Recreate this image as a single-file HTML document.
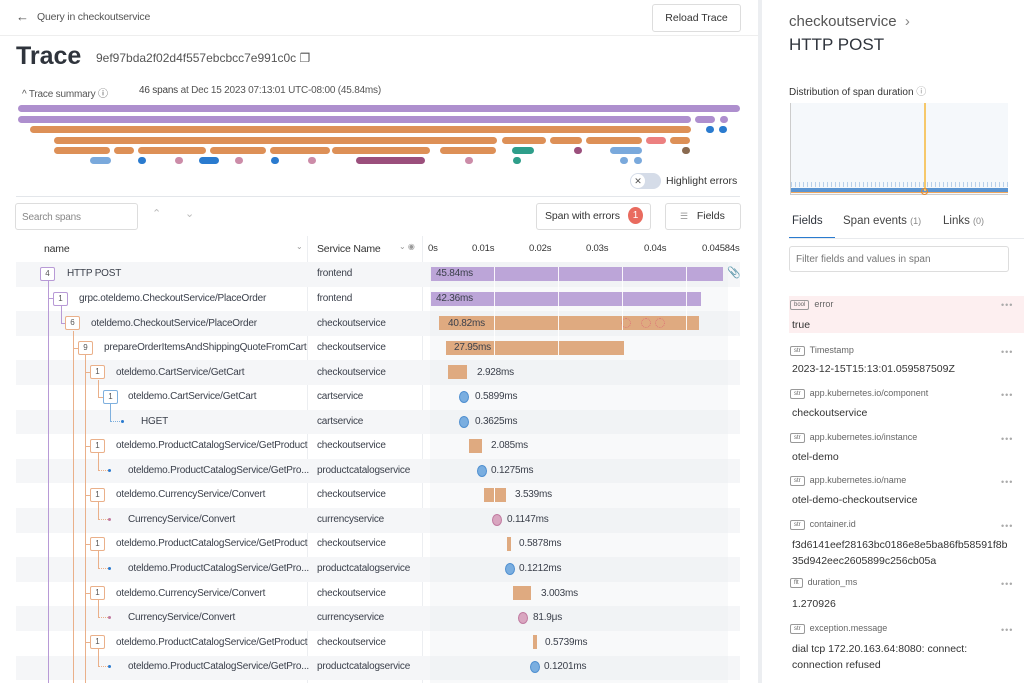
<!DOCTYPE html>
<html><head><meta charset="utf-8"><style>
*{box-sizing:border-box;margin:0;padding:0}
body{width:1024px;height:683px;overflow:hidden;background:#fff;font-family:"Liberation Sans",sans-serif;color:#3a3f4a;position:relative}
.a{position:absolute}
.t{font-size:10px;letter-spacing:-0.2px;white-space:nowrap}
.row{position:absolute;left:16px;width:724px;height:24.6px}
.g{background:#f5f6f8}
.bd{position:absolute;width:15px;height:14px;border:1px solid;border-radius:2px;font-size:8px;text-align:center;line-height:12px;background:#fff}
.po{border-color:#b89ad6;color:#555}.or{border-color:#eab08a;color:#555}.bl{border-color:#7fb0de;color:#555}
.bar{position:absolute;height:14px}
.pu{background:#bca5d8}.oa{background:#dfaa80}
.lbl{position:absolute;font-size:10px;letter-spacing:-0.2px;color:#3a3f4a}
.dot{position:absolute;width:10px;height:12px;border-radius:50%}
.db{background:#7aaee0;border:1px solid #4f8fd0}
.dp{background:#d9a6c0;border:1px solid #c07aa0}
.ln{position:absolute}
.sb{position:absolute;height:7px;border-radius:4px}
.fk{position:absolute;left:790px;font-size:9px;color:#666}
.fk b{display:inline-block;border:1px solid #999;border-radius:2px;font-size:6px;font-weight:normal;padding:0 3px;margin-right:5px;line-height:8px;vertical-align:1px}
.fv{position:absolute;left:792px;font-size:10.5px;color:#333}
.dd{position:absolute;left:1001px;font-size:9px;color:#aaa;letter-spacing:1px}
</style></head><body>
<div class="a" style="left:16px;top:9px;font-size:13px;color:#555">&#8592;</div>
<div class="a t" style="left:37px;top:11px;font-size:10.5px;color:#555">Query in checkoutservice</div>
<div class="a" style="left:652px;top:4px;width:89px;height:28px;border:1px solid #ddd;border-radius:3px;font-size:10.5px;text-align:center;line-height:26px;color:#333">Reload Trace</div>
<div class="a" style="left:0;top:35px;width:758px;height:1px;background:#eee"></div>
<div class="a" style="left:16px;top:42px;font-size:25px;font-weight:bold;color:#2f343c">Trace</div>
<div class="a t" style="left:96px;top:51px;font-size:12px;color:#555;letter-spacing:0">9ef97bda2f02d4f557ebcbcc7e991c0c &#10064;</div>
<div class="a t" style="left:22px;top:85px;font-size:10px;color:#555">^ Trace summary &#9432;</div>
<div class="a t" style="left:139px;top:85px;font-size:10px;color:#555"><b style="color:#444;font-weight:normal">46 spans</b> at Dec 15 2023 07:13:01 UTC-08:00 (45.84ms)</div>
<div class="sb" style="left:18px;width:722px;top:105px;background:#ae8fce"></div>
<div class="sb" style="left:18px;width:673px;top:116px;background:#ae8fce"></div>
<div class="sb" style="left:695px;width:20px;top:116px;background:#ae8fce"></div>
<div class="sb" style="left:720px;width:8px;top:116px;background:#ae8fce"></div>
<div class="sb" style="left:30px;width:661px;top:126px;background:#dd9057"></div>
<div class="sb" style="left:706px;width:8px;top:126px;background:#2a7bcf"></div>
<div class="sb" style="left:719px;width:8px;top:126px;background:#2a7bcf"></div>
<div class="sb" style="left:54px;width:443px;top:137px;background:#dd9057"></div>
<div class="sb" style="left:502px;width:44px;top:137px;background:#dd9057"></div>
<div class="sb" style="left:550px;width:32px;top:137px;background:#dd9057"></div>
<div class="sb" style="left:586px;width:56px;top:137px;background:#dd9057"></div>
<div class="sb" style="left:646px;width:20px;top:137px;background:#ec8080"></div>
<div class="sb" style="left:670px;width:20px;top:137px;background:#dd9057"></div>
<div class="sb" style="left:54px;width:56px;top:147px;background:#dd9057"></div>
<div class="sb" style="left:114px;width:20px;top:147px;background:#dd9057"></div>
<div class="sb" style="left:138px;width:68px;top:147px;background:#dd9057"></div>
<div class="sb" style="left:210px;width:56px;top:147px;background:#dd9057"></div>
<div class="sb" style="left:270px;width:60px;top:147px;background:#dd9057"></div>
<div class="sb" style="left:332px;width:98px;top:147px;background:#dd9057"></div>
<div class="sb" style="left:440px;width:56px;top:147px;background:#dd9057"></div>
<div class="sb" style="left:512px;width:22px;top:147px;background:#2e9e8a"></div>
<div class="sb" style="left:574px;width:8px;top:147px;background:#9b4f7c"></div>
<div class="sb" style="left:610px;width:32px;top:147px;background:#7aa9dc"></div>
<div class="sb" style="left:682px;width:8px;top:147px;background:#8a6a50"></div>
<div class="sb" style="left:90px;width:21px;top:157px;background:#7aa9dc"></div>
<div class="sb" style="left:138px;width:8px;top:157px;background:#2a7bcf"></div>
<div class="sb" style="left:175px;width:8px;top:157px;background:#cc8ca8"></div>
<div class="sb" style="left:199px;width:20px;top:157px;background:#2a7bcf"></div>
<div class="sb" style="left:235px;width:8px;top:157px;background:#cc8ca8"></div>
<div class="sb" style="left:271px;width:8px;top:157px;background:#2a7bcf"></div>
<div class="sb" style="left:308px;width:8px;top:157px;background:#cc8ca8"></div>
<div class="sb" style="left:356px;width:69px;top:157px;background:#9b4f7c"></div>
<div class="sb" style="left:465px;width:8px;top:157px;background:#cc8ca8"></div>
<div class="sb" style="left:513px;width:8px;top:157px;background:#2e9e8a"></div>
<div class="sb" style="left:620px;width:8px;top:157px;background:#7aa9dc"></div>
<div class="sb" style="left:634px;width:8px;top:157px;background:#7aa9dc"></div>
<div class="a" style="left:630px;top:173px;width:31px;height:16px;border-radius:8px;background:#d5dce8"></div>
<div class="a" style="left:631px;top:174px;width:14px;height:14px;border-radius:50%;background:#fff;font-size:9px;text-align:center;line-height:14px;color:#555">&#10005;</div>
<div class="a t" style="left:666px;top:175px;font-size:10.5px;color:#333;letter-spacing:0">Highlight errors</div>
<div class="a" style="left:16px;top:196px;width:724px;height:1px;background:#e3e6ea"></div>
<div class="a t" style="left:15px;top:203px;width:123px;height:27px;border:1px solid #ddd;border-radius:3px;padding:8px 6px;font-size:10px;color:#888">Search spans</div>
<div class="a" style="left:152px;top:207px;font-size:11px;color:#bbb">&#8963;</div>
<div class="a" style="left:185px;top:207px;font-size:11px;color:#bbb">&#8964;</div>
<div class="a" style="left:536px;top:203px;width:115px;height:27px;border:1px solid #ddd;border-radius:3px"></div>
<div class="a t" style="left:545px;top:210px;font-size:10.5px;color:#333;letter-spacing:-0.1px">Span with errors</div>
<div class="a" style="left:628px;top:207px;width:15px;height:17px;border-radius:50%;background:#e96b5f;color:#fff;font-size:10px;text-align:center;line-height:17px">1</div>
<div class="a" style="left:665px;top:203px;width:76px;height:27px;border:1px solid #ddd;border-radius:3px;font-size:10.5px;line-height:25px;color:#333;padding-left:14px"><span style="color:#999;font-size:9px">&#9776;</span>&nbsp;&nbsp;&nbsp;Fields</div>
<div class="a t" style="left:44px;top:243px;font-size:10.5px;color:#333">name</div>
<div class="a" style="left:296px;top:242px;font-size:8px;color:#999">&#8964;</div>
<div class="a" style="left:307px;top:236px;width:1px;height:447px;background:#eceef1"></div>
<div class="a" style="left:422px;top:236px;width:1px;height:447px;background:#eceef1"></div>
<div class="a t" style="left:317px;top:243px;font-size:10.5px;color:#333">Service Name</div>
<div class="a" style="left:399px;top:242px;font-size:8px;color:#999">&#8964; &#9673;</div>
<div class="a t" style="left:428px;top:243px;font-size:9.5px;color:#333">0s</div>
<div class="a t" style="left:472px;top:243px;font-size:9.5px;color:#333">0.01s</div>
<div class="a t" style="left:529px;top:243px;font-size:9.5px;color:#333">0.02s</div>
<div class="a t" style="left:586px;top:243px;font-size:9.5px;color:#333">0.03s</div>
<div class="a t" style="left:644px;top:243px;font-size:9.5px;color:#333">0.04s</div>
<div class="a t" style="left:702px;top:243px;font-size:9.5px;color:#333">0.04584s</div>
<div class="row g" style="top:262px"></div>
<div class="row" style="top:286.6px"></div>
<div class="row g" style="top:311.2px"></div>
<div class="row" style="top:335.8px"></div>
<div class="row g" style="top:360.4px"></div>
<div class="row" style="top:385px"></div>
<div class="row g" style="top:409.6px"></div>
<div class="row" style="top:434.2px"></div>
<div class="row g" style="top:458.8px"></div>
<div class="row" style="top:483.4px"></div>
<div class="row g" style="top:508px"></div>
<div class="row" style="top:532.6px"></div>
<div class="row g" style="top:557.2px"></div>
<div class="row" style="top:581.8px"></div>
<div class="row g" style="top:606.4px"></div>
<div class="row" style="top:631px"></div>
<div class="row g" style="top:655.6px"></div>
<div class="a" style="left:430px;top:262px;width:298px;height:421px;background:rgba(235,238,242,0.35)"></div>
<div class="ln" style="left:48px;top:281px;width:1px;height:402px;background:#b89ad6"></div>
<div class="ln" style="left:48px;top:298px;width:5px;height:1px;background:#b89ad6"></div>
<div class="ln" style="left:61px;top:306px;width:1px;height:17px;background:#b89ad6"></div>
<div class="ln" style="left:61px;top:323px;width:4px;height:1px;background:#b89ad6"></div>
<div class="ln" style="left:73px;top:331px;width:1px;height:352px;background:#eab08a"></div>
<div class="ln" style="left:73px;top:348px;width:5px;height:1px;background:#eab08a"></div>
<div class="ln" style="left:85px;top:355px;width:1px;height:328px;background:#eab08a"></div>
<div class="ln" style="left:85px;top:372px;width:5px;height:1px;background:#eab08a"></div>
<div class="ln" style="left:98px;top:380px;width:1px;height:17px;background:#eab08a"></div>
<div class="ln" style="left:98px;top:397px;width:5px;height:1px;background:#eab08a"></div>
<div class="ln" style="left:110px;top:404px;width:1px;height:17px;background:#7fb0de"></div>
<div class="ln" style="left:110px;top:421px;width:10px;height:1px;border-top:1px dotted #7fb0de"></div>
<div class="ln" style="left:121px;top:420px;width:3px;height:3px;border-radius:50%;background:#2a7bcf"></div>
<div class="ln" style="left:85px;top:446px;width:5px;height:1px;background:#eab08a"></div>
<div class="ln" style="left:98px;top:453px;width:1px;height:17px;background:#eab08a"></div>
<div class="ln" style="left:98px;top:470px;width:10px;height:1px;border-top:1px dotted #eab08a"></div>
<div class="ln" style="left:108px;top:469px;width:3px;height:3px;border-radius:50%;background:#2a7bcf"></div>
<div class="ln" style="left:85px;top:495px;width:5px;height:1px;background:#eab08a"></div>
<div class="ln" style="left:98px;top:502px;width:1px;height:17px;background:#eab08a"></div>
<div class="ln" style="left:98px;top:519px;width:10px;height:1px;border-top:1px dotted #eab08a"></div>
<div class="ln" style="left:108px;top:518px;width:3px;height:3px;border-radius:50%;background:#c07aa0"></div>
<div class="ln" style="left:85px;top:544px;width:5px;height:1px;background:#eab08a"></div>
<div class="ln" style="left:98px;top:551px;width:1px;height:17px;background:#eab08a"></div>
<div class="ln" style="left:98px;top:568px;width:10px;height:1px;border-top:1px dotted #eab08a"></div>
<div class="ln" style="left:108px;top:567px;width:3px;height:3px;border-radius:50%;background:#2a7bcf"></div>
<div class="ln" style="left:85px;top:593px;width:5px;height:1px;background:#eab08a"></div>
<div class="ln" style="left:98px;top:600px;width:1px;height:17px;background:#eab08a"></div>
<div class="ln" style="left:98px;top:617px;width:10px;height:1px;border-top:1px dotted #eab08a"></div>
<div class="ln" style="left:108px;top:616px;width:3px;height:3px;border-radius:50%;background:#c07aa0"></div>
<div class="ln" style="left:85px;top:642px;width:5px;height:1px;background:#eab08a"></div>
<div class="ln" style="left:98px;top:649px;width:1px;height:17px;background:#eab08a"></div>
<div class="ln" style="left:98px;top:666px;width:10px;height:1px;border-top:1px dotted #eab08a"></div>
<div class="ln" style="left:108px;top:665px;width:3px;height:3px;border-radius:50%;background:#2a7bcf"></div>
<div class="bd po" style="left:40px;top:267px">4</div>
<div class="bd po" style="left:53px;top:292px">1</div>
<div class="bd or" style="left:65px;top:316px">6</div>
<div class="bd or" style="left:78px;top:341px">9</div>
<div class="bd or" style="left:90px;top:365px">1</div>
<div class="bd bl" style="left:103px;top:390px">1</div>
<div class="bd or" style="left:90px;top:439px">1</div>
<div class="bd or" style="left:90px;top:488px">1</div>
<div class="bd or" style="left:90px;top:537px">1</div>
<div class="bd or" style="left:90px;top:586px">1</div>
<div class="bd or" style="left:90px;top:635px">1</div>
<div class="a t" style="left:67px;top:268px">HTTP POST</div>
<div class="a t" style="left:79px;top:293px">grpc.oteldemo.CheckoutService/PlaceOrder</div>
<div class="a t" style="left:91px;top:318px">oteldemo.CheckoutService/PlaceOrder</div>
<div class="a t" style="left:104px;top:342px">prepareOrderItemsAndShippingQuoteFromCart</div>
<div class="a t" style="left:116px;top:367px">oteldemo.CartService/GetCart</div>
<div class="a t" style="left:128px;top:391px">oteldemo.CartService/GetCart</div>
<div class="a t" style="left:141px;top:416px">HGET</div>
<div class="a t" style="left:116px;top:440px">oteldemo.ProductCatalogService/GetProduct</div>
<div class="a t" style="left:128px;top:465px">oteldemo.ProductCatalogService/GetPro...</div>
<div class="a t" style="left:116px;top:489px">oteldemo.CurrencyService/Convert</div>
<div class="a t" style="left:128px;top:514px">CurrencyService/Convert</div>
<div class="a t" style="left:116px;top:538px">oteldemo.ProductCatalogService/GetProduct</div>
<div class="a t" style="left:128px;top:563px">oteldemo.ProductCatalogService/GetPro...</div>
<div class="a t" style="left:116px;top:588px">oteldemo.CurrencyService/Convert</div>
<div class="a t" style="left:128px;top:612px">CurrencyService/Convert</div>
<div class="a t" style="left:116px;top:637px">oteldemo.ProductCatalogService/GetProduct</div>
<div class="a t" style="left:128px;top:661px">oteldemo.ProductCatalogService/GetPro...</div>
<div class="a t" style="left:317px;top:268px">frontend</div>
<div class="a t" style="left:317px;top:293px">frontend</div>
<div class="a t" style="left:317px;top:318px">checkoutservice</div>
<div class="a t" style="left:317px;top:342px">checkoutservice</div>
<div class="a t" style="left:317px;top:367px">checkoutservice</div>
<div class="a t" style="left:317px;top:391px">cartservice</div>
<div class="a t" style="left:317px;top:416px">cartservice</div>
<div class="a t" style="left:317px;top:440px">checkoutservice</div>
<div class="a t" style="left:317px;top:465px">productcatalogservice</div>
<div class="a t" style="left:317px;top:489px">checkoutservice</div>
<div class="a t" style="left:317px;top:514px">currencyservice</div>
<div class="a t" style="left:317px;top:538px">checkoutservice</div>
<div class="a t" style="left:317px;top:563px">productcatalogservice</div>
<div class="a t" style="left:317px;top:588px">checkoutservice</div>
<div class="a t" style="left:317px;top:612px">currencyservice</div>
<div class="a t" style="left:317px;top:637px">checkoutservice</div>
<div class="a t" style="left:317px;top:661px">productcatalogservice</div>
<div class="bar pu" style="left:431px;width:292px;top:267px"></div><div class="lbl" style="left:436px;top:268px">45.84ms</div>
<div class="a" style="left:727px;top:266px;font-size:11px;color:#999">&#128206;</div>
<div class="bar pu" style="left:431px;width:270px;top:292px"></div><div class="lbl" style="left:436px;top:293px">42.36ms</div>
<div class="bar oa" style="left:439px;width:260px;top:316px"></div><div class="lbl" style="left:448px;top:318px">40.82ms</div>
<div class="a" style="left:621px;top:318px;width:10px;height:10px;border:1px dotted #d77;border-radius:50%"></div>
<div class="a" style="left:641px;top:318px;width:10px;height:10px;border:1px dotted #d77;border-radius:50%"></div>
<div class="a" style="left:655px;top:318px;width:10px;height:10px;border:1px dotted #d77;border-radius:50%"></div>
<div class="bar oa" style="left:446px;width:178px;top:341px"></div><div class="lbl" style="left:454px;top:342px">27.95ms</div>
<div class="bar oa" style="left:448px;width:19px;top:365px"></div><div class="lbl" style="left:477px;top:367px">2.928ms</div>
<div class="dot db" style="left:459px;top:391px"></div><div class="lbl" style="left:475px;top:391px">0.5899ms</div>
<div class="dot db" style="left:459px;top:416px"></div><div class="lbl" style="left:475px;top:416px">0.3625ms</div>
<div class="bar oa" style="left:469px;width:13px;top:439px"></div><div class="lbl" style="left:491px;top:440px">2.085ms</div>
<div class="dot db" style="left:477px;top:465px"></div><div class="lbl" style="left:491px;top:465px">0.1275ms</div>
<div class="bar oa" style="left:484px;width:22px;top:488px"></div><div class="lbl" style="left:515px;top:489px">3.539ms</div>
<div class="ln" style="left:494px;top:488px;width:1px;height:14px;background:#fff"></div>
<div class="dot dp" style="left:492px;top:514px"></div><div class="lbl" style="left:507px;top:514px">0.1147ms</div>
<div class="bar oa" style="left:507px;width:4px;top:537px"></div><div class="lbl" style="left:519px;top:538px">0.5878ms</div>
<div class="dot db" style="left:505px;top:563px"></div><div class="lbl" style="left:519px;top:563px">0.1212ms</div>
<div class="bar oa" style="left:513px;width:18px;top:586px"></div><div class="lbl" style="left:541px;top:588px">3.003ms</div>
<div class="dot dp" style="left:518px;top:612px"></div><div class="lbl" style="left:533px;top:612px">81.9μs</div>
<div class="bar oa" style="left:533px;width:4px;top:635px"></div><div class="lbl" style="left:545px;top:637px">0.5739ms</div>
<div class="dot db" style="left:530px;top:661px"></div><div class="lbl" style="left:544px;top:661px">0.1201ms</div>
<div class="ln" style="left:494px;top:267px;width:1px;height:88px;background:rgba(255,255,255,0.9)"></div>
<div class="ln" style="left:558px;top:267px;width:1px;height:88px;background:rgba(255,255,255,0.9)"></div>
<div class="ln" style="left:622px;top:267px;width:1px;height:63px;background:rgba(255,255,255,0.9)"></div>
<div class="ln" style="left:686px;top:267px;width:1px;height:63px;background:rgba(255,255,255,0.9)"></div>
<div class="a" style="left:758px;top:0;width:4px;height:683px;background:#eceef1"></div>
<div class="a" style="left:789px;top:13px;font-size:15px;color:#555">checkoutservice &nbsp;<span style="color:#888">&#8250;</span></div>
<div class="a" style="left:789px;top:35px;font-size:17px;color:#2f343c">HTTP POST</div>
<div class="a" style="left:789px;top:83px;font-size:10px;color:#333">Distribution of span duration <span style="color:#999">&#9432;</span></div>
<div class="a" style="left:790px;top:103px;width:218px;height:92px;background:#f5f8fb;border-left:1px solid #ccc;border-bottom:1px solid #ccc"></div>
<div class="a" style="left:791px;top:188px;width:217px;height:4px;background:#5b95d2"></div>
<div class="a" style="left:791px;top:192px;width:217px;height:1px;background:#f0a860"></div>
<div class="a" style="left:791px;top:182px;width:217px;height:5px;background:repeating-linear-gradient(90deg,#b8d0ea 0 1px,transparent 1px 4px)"></div>
<div class="a" style="left:924px;top:103px;width:2px;height:88px;background:#f6c86a"></div>
<div class="a" style="left:921px;top:188px;width:7px;height:7px;border:1px solid #e88a2a;border-radius:50%"></div>
<div class="a" style="left:792px;top:215px;font-size:11.5px;color:#2f343c">Fields</div>
<div class="a" style="left:843px;top:215px;font-size:11.5px;color:#444">Span events <span style="font-size:9px;color:#888">(1)</span></div>
<div class="a" style="left:943px;top:215px;font-size:11.5px;color:#444">Links <span style="font-size:9px;color:#888">(0)</span></div>
<div class="a" style="left:789px;top:237px;width:46px;height:2px;background:#2a7bcf"></div>
<div class="a" style="left:789px;top:238px;width:235px;height:1px;background:#e8eaed"></div>
<div class="a" style="left:789px;top:246px;width:220px;height:26px;border:1px solid #ddd;border-radius:3px;font-size:10px;color:#777;padding:7px 6px">Filter fields and values in span</div>
<div class="a" style="left:789px;top:296px;width:235px;height:37px;background:#fdeff0"></div>
<div class="fk" style="top:299px"><b>bool</b>error</div><div class="dd" style="top:300px">•••</div>
<div class="fv" style="top:319px">true</div>
<div class="fk" style="top:345px"><b>str</b>Timestamp</div><div class="dd" style="top:347px">•••</div>
<div class="fv" style="top:363px">2023-12-15T15:13:01.059587509Z</div>
<div class="fk" style="top:388px"><b>str</b>app.kubernetes.io/component</div><div class="dd" style="top:390px">•••</div>
<div class="fv" style="top:407px">checkoutservice</div>
<div class="fk" style="top:432px"><b>str</b>app.kubernetes.io/instance</div><div class="dd" style="top:434px">•••</div>
<div class="fv" style="top:451px">otel-demo</div>
<div class="fk" style="top:475px"><b>str</b>app.kubernetes.io/name</div><div class="dd" style="top:477px">•••</div>
<div class="fv" style="top:494px">otel-demo-checkoutservice</div>
<div class="fk" style="top:519px"><b>str</b>container.id</div><div class="dd" style="top:521px">•••</div>
<div class="fv" style="top:537px;line-height:16px">f3d6141eef28163bc0186e8e5ba86fb58591f8b<br>35d942eec2605899c256cb05a</div>
<div class="fk" style="top:577px"><b>flt</b>duration_ms</div><div class="dd" style="top:579px">•••</div>
<div class="fv" style="top:598px">1.270926</div>
<div class="fk" style="top:623px"><b>str</b>exception.message</div><div class="dd" style="top:625px">•••</div>
<div class="fv" style="top:641px;line-height:16px">dial tcp 172.20.163.64:8080: connect:<br>connection refused</div>
</body></html>
